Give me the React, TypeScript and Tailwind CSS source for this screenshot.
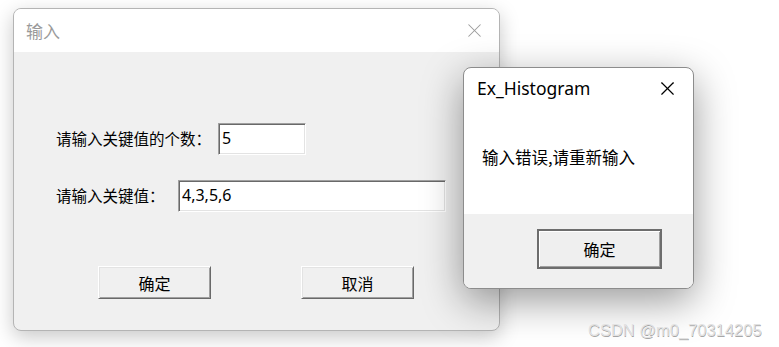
import { X } from 'lucide-react';

const cjk = { fontFamily: '"Noto Sans CJK SC", "Noto Sans", sans-serif' };
const ui = { fontFamily: '"Noto Sans", "Noto Sans CJK SC", sans-serif' };

// classic sunken edit box
function EditBox({ value, className }: { value: string; className: string }) {
  return (
    <div
      className={`h-8 bg-white border border-t-[#a0a0a0] border-l-[#a0a0a0] border-b-white border-r-white shadow-[inset_1px_1px_0_#696969,inset_-1px_-1px_0_#e3e3e3] pl-[3px] text-[16px] leading-[28px] text-black ${className}`}
      style={ui}
    >
      {value}
    </div>
  );
}

// classic raised push button
function PushButton({ label }: { label: string }) {
  return (
    <div
      className="h-[33px] w-[113px] flex items-center justify-center bg-[#f0f0f0] border border-t-white border-l-white border-b-[#696969] border-r-[#696969] shadow-[inset_1px_1px_0_#e3e3e3,inset_-1px_-1px_0_#a0a0a0] text-[16px] text-black"
      style={cjk}
    >
      {label}
    </div>
  );
}

export default function App() {
  return (
    <div className="relative w-[779px] h-[347px] overflow-hidden bg-white">
      {/* 输入 dialog (inactive) */}
      <div className="absolute left-[13px] top-[8px] w-[487px] h-[323px] rounded-[8px] border border-[#b4b4b4] bg-[#f0f0f0] overflow-hidden shadow-[0_6px_20px_rgba(0,0,0,0.22)] flex flex-col">
        <div className="h-[43px] bg-white flex items-center justify-between pl-[12px] pr-[13px] shrink-0">
          <span className="text-[17px] text-[#9a9a9a]" style={cjk}>输入</span>
          <X size={23} strokeWidth={1.1} className="text-[#9a9a9a]" />
        </div>
        <div className="flex flex-col pl-[42px]">
          <div className="flex items-center mt-[71px]">
            <span className="w-[162px] text-[15.5px] text-black" style={cjk}>请输入关键值的个数：</span>
            <EditBox value="5" className="w-[88px]" />
          </div>
          <div className="flex items-center mt-[25px]">
            <span className="w-[122px] text-[15.5px] text-black" style={cjk}>请输入关键值：</span>
            <EditBox value="4,3,5,6" className="w-[268px]" />
          </div>
          <div className="flex mt-[54px] pl-[42px] gap-[90px]">
            <PushButton label="确定" />
            <PushButton label="取消" />
          </div>
        </div>
      </div>

      {/* message box (active) */}
      <div className="absolute left-[463px] top-[67px] w-[231px] h-[222px] rounded-[8px] border border-[#8c8c8c] bg-white overflow-hidden shadow-[0_12px_40px_rgba(0,0,0,0.4)] flex flex-col">
        <div className="h-[146px] flex flex-col shrink-0">
          <div className="flex items-center justify-between pl-[13px] pr-[14px] pt-[7px]">
            <span className="text-[17.5px] text-black" style={ui}>Ex_Histogram</span>
            <X size={23} strokeWidth={1.2} className="text-black" />
          </div>
          <div className="mt-[44px] pl-[18px] text-[16.5px] text-black" style={cjk}>
            输入错误,请重新输入
          </div>
        </div>
        <div className="flex-1 bg-[#f0f0f0] flex justify-end items-start pr-[31px] pt-[15px]">
          <div
            className="w-[125px] h-[40px] flex items-center justify-center bg-[#efefef] border-2 border-[#6d6d6d] shadow-[inset_1px_1px_0_#ffffff,inset_-1px_-1px_0_#a0a0a0] text-[16px] text-black"
            style={cjk}
          >
            确定
          </div>
        </div>
      </div>

      {/* watermark */}
      <div
        className="absolute left-[588px] top-[318px] text-[16.5px] text-[#e2e2e2] [text-shadow:0.5px_0.5px_0.5px_rgba(0,0,0,0.35)]"
        style={{ fontFamily: '"Liberation Sans", Arial, sans-serif' }}
      >
        CSDN @m0_70314205
      </div>
    </div>
  );
}
